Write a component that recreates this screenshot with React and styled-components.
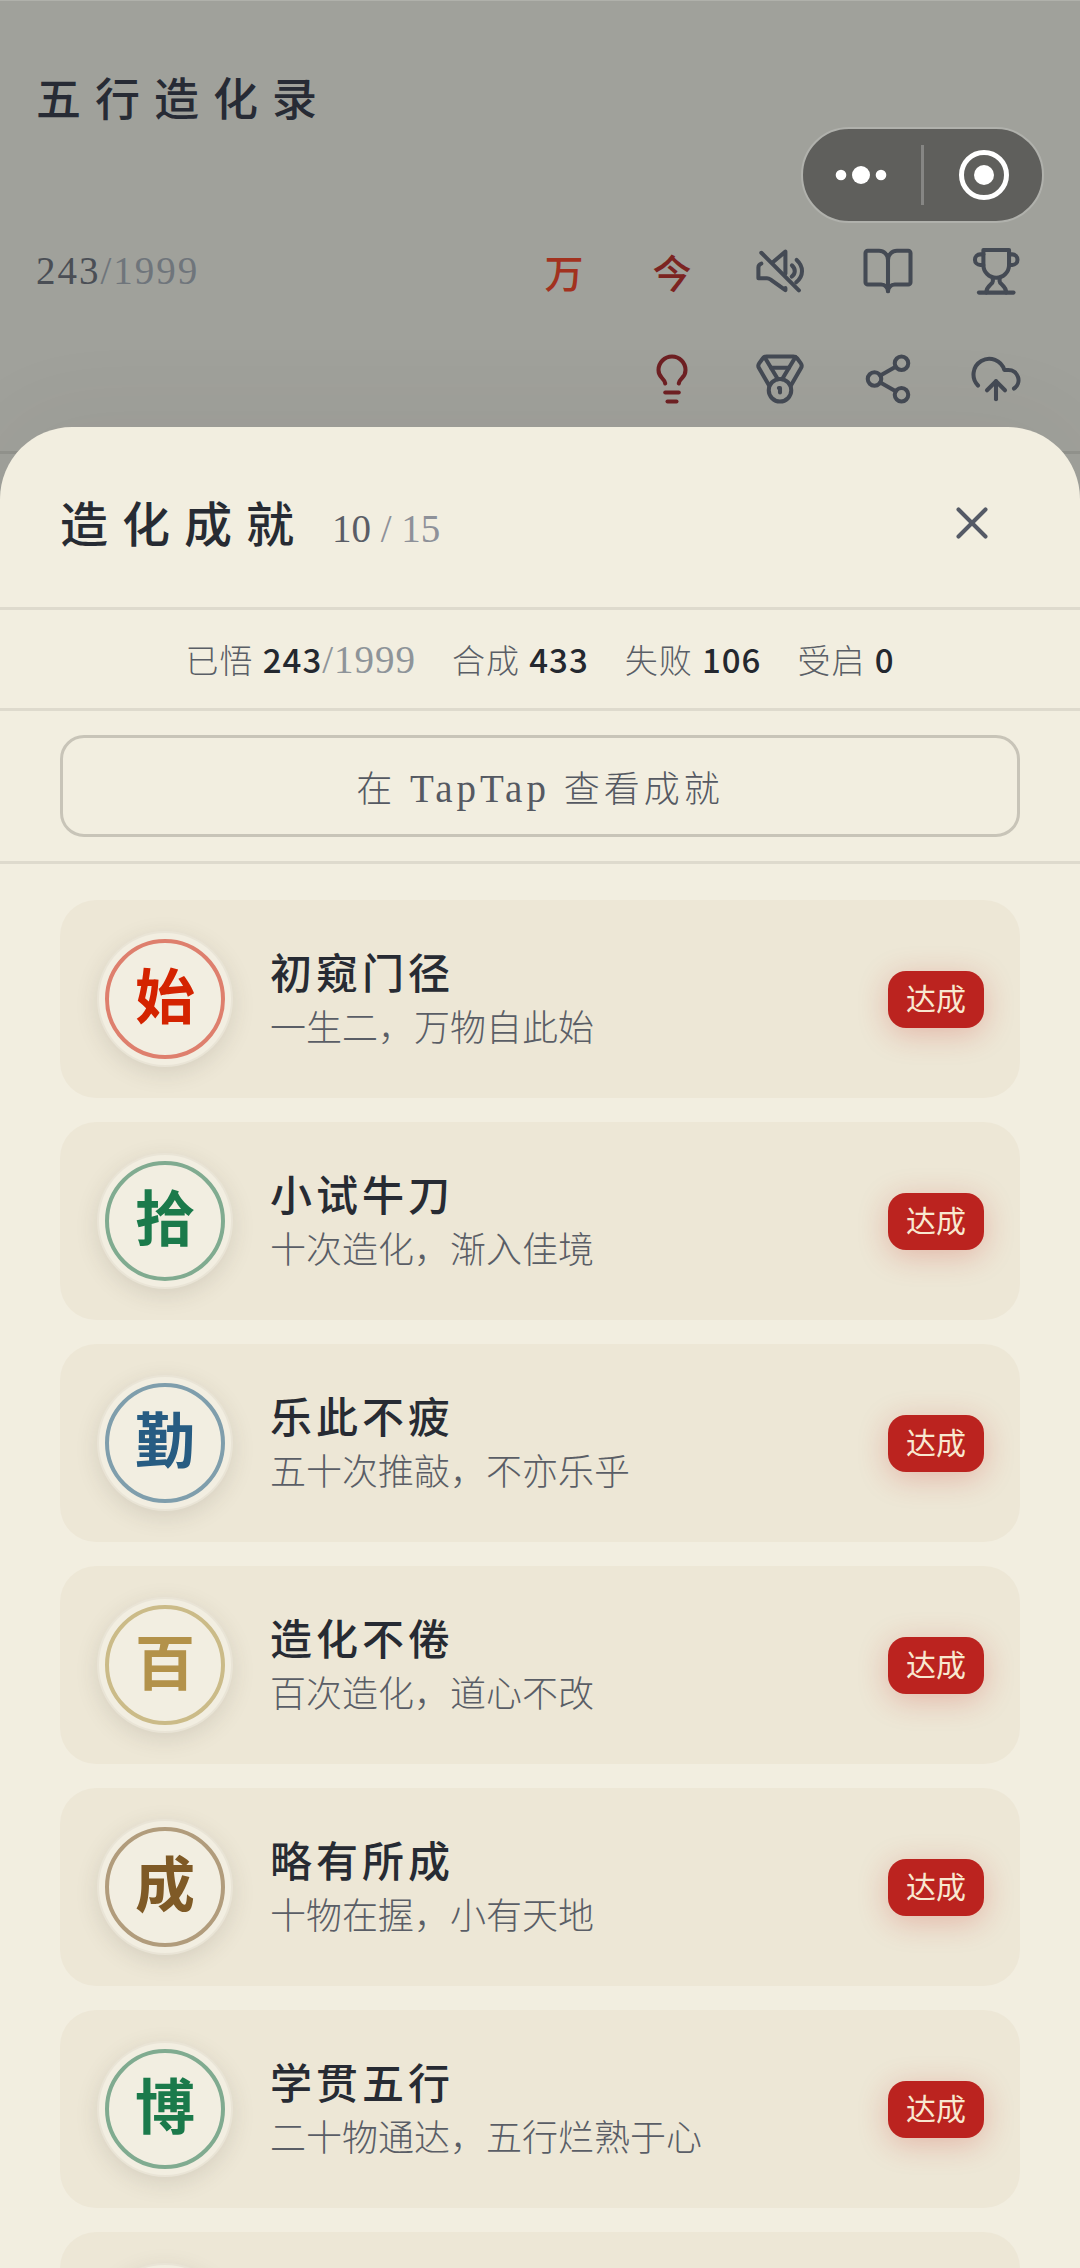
import React from 'react';
import styled, { createGlobalStyle } from 'styled-components';
import { BookOpen, Lightbulb, Medal, Share2, CloudUpload, X } from 'lucide-react';

const stats = [
  { label: '已悟', value: '243', total: '/1999' },
  { label: '合成', value: '433' },
  { label: '失败', value: '106' },
  { label: '受启', value: '0' },
];

const achievements = [
  { mark: '始', name: '初窥门径', text: '一生二，万物自此始', color: '#d42300', ring: '#de7f6d' },
  { mark: '拾', name: '小试牛刀', text: '十次造化，渐入佳境', color: '#1b7a4b', ring: '#80ab90' },
  { mark: '勤', name: '乐此不疲', text: '五十次推敲，不亦乐乎', color: '#275c82', ring: '#7f9eac' },
  { mark: '百', name: '造化不倦', text: '百次造化，道心不改', color: '#b3924a', ring: '#cbbb88' },
  { mark: '成', name: '略有所成', text: '十物在握，小有天地', color: '#7f5a26', ring: '#b19c7c' },
  { mark: '博', name: '学贯五行', text: '二十物通达，五行烂熟于心', color: '#1b7a4b', ring: '#80ab90' },
];

function App(){
  return(
    <Screen>
      <GlobalStyle/>
      <TopBar>
        <GameTitle>五行造化录</GameTitle>
        <TopRow>
          <TopCount>243<span>/1999</span></TopCount>
          <Actions>
            <IconButton $color="#a2321f" aria-label="万物">万</IconButton>
            <IconButton $color="#7c2421" aria-label="今日">今</IconButton>
            <IconButton aria-label="静音"><MuteIcon/></IconButton>
            <IconButton aria-label="图鉴"><BookOpen size={54} strokeWidth={1.8}/></IconButton>
            <IconButton aria-label="成就"><TrophyIcon/></IconButton>
            <IconButton $color="#6e2023" aria-label="提示"><Lightbulb size={54} strokeWidth={1.8}/></IconButton>
            <IconButton aria-label="排行"><Medal size={54} strokeWidth={1.8}/></IconButton>
            <IconButton aria-label="分享"><Share2 size={54} strokeWidth={1.8}/></IconButton>
            <IconButton aria-label="上传"><CloudUpload size={54} strokeWidth={1.8}/></IconButton>
          </Actions>
        </TopRow>
      </TopBar>

      <Capsule>
        <CapsuleButton aria-label="更多">
          <svg width="54" height="54" viewBox="0 0 54 54" fill="#fff">
            <circle cx="6" cy="27" r="5.3"/>
            <circle cx="26" cy="27" r="9"/>
            <circle cx="46" cy="27" r="5.3"/>
          </svg>
        </CapsuleButton>
        <CapsuleLine/>
        <CapsuleButton aria-label="关闭小游戏">
          <svg width="54" height="54" viewBox="0 0 54 54">
            <circle cx="28" cy="27" r="22.5" fill="none" stroke="#fff" strokeWidth="5"/>
            <circle cx="28" cy="27" r="10" fill="#fff"/>
          </svg>
        </CapsuleButton>
      </Capsule>

      <Overlay>
        <Sheet role="dialog" aria-label="造化成就">
          <SheetHeader>
            <SheetTitle>造化成就</SheetTitle>
            <SheetCount>10<span> / 15</span></SheetCount>
            <CloseButton aria-label="关闭"><X size={54} strokeWidth={1.8}/></CloseButton>
          </SheetHeader>
          <Stats>
            {stats.map((s) => (
              <Stat key={s.label}>
                {s.label} <b>{s.value}</b>{s.total && <span>{s.total}</span>}
              </Stat>
            ))}
          </Stats>
          <LinkBar>
            <TapButton>在<span> TapTap </span>查看成就</TapButton>
          </LinkBar>
          <List>
            {achievements.map((a) => (
              <Card key={a.name}>
                <Seal $color={a.color} $ring={a.ring}><span>{a.mark}</span></Seal>
                <CardText>
                  <h3>{a.name}</h3>
                  <p>{a.text}</p>
                </CardText>
                <Badge>达成</Badge>
              </Card>
            ))}
            <Card>
              <Seal $color="#275c82" $ring="#7f9eac"><span/></Seal>
            </Card>
          </List>
        </Sheet>
      </Overlay>
    </Screen>
  )
}

const MuteIcon = () => (
  <svg width="54" height="54" viewBox="0 0 24 24" fill="none" stroke="currentColor" strokeWidth="1.8" strokeLinecap="round" strokeLinejoin="round">
    <path d="M3.7 3.9 20.4 20.6"/>
    <path d="M8.8 8.1 14.4 3.4V13.2"/>
    <path d="M3.7 8.7C2.8 9 2.4 9.5 2.4 10.4V15.2H6.2C7 15.2 7.4 15.5 8 15.9L14.4 20.5V19.6"/>
    <path d="M17.3 9.5C19 11 19 13.2 17.2 14.5"/>
    <path d="M19.4 7.1C22.6 10 22.6 14.2 19.2 17"/>
  </svg>
);

const TrophyIcon = () => (
  <svg width="54" height="54" viewBox="0 0 24 24" fill="none" stroke="currentColor" strokeWidth="1.8" strokeLinecap="round" strokeLinejoin="round">
    <path d="M6.4 2.7H17.8V9.3A5.7 5.7 0 0 1 6.4 9.3Z"/>
    <path d="M6.4 4.6H5A2.3 2.3 0 0 0 5 9.3H6.4"/>
    <path d="M17.8 4.6H19.2A2.3 2.3 0 0 1 19.2 9.3H17.8"/>
    <path d="M10.6 15.3V16.6C10.6 18 7.7 18.4 7.7 21.6"/>
    <path d="M13.6 15.3V16.6C13.6 18 16.5 18.4 16.5 21.6"/>
    <path d="M4.4 21.6H19.8"/>
  </svg>
);

const GlobalStyle = createGlobalStyle`
  * {
    box-sizing: border-box;
    margin: 0;
    padding: 0;
  }

  body {
    background: #a0a19b;
    font-family: "Liberation Serif", "Noto Sans CJK SC", serif;
  }

  button {
    border: none;
    background: none;
    font-family: inherit;
    cursor: pointer;
  }

  svg {
    display: block;
  }
`;

const Screen = styled.div`
  position: relative;
  height: 100vh;
  overflow: hidden;
`;

const TopBar = styled.header`
  padding: 66px 36px 24px;
  border-top: 1px solid #b0b1ab;
  border-bottom: 3px solid #92938d;
`;

const GameTitle = styled.h1`
  font-size: 45px;
  line-height: 68px;
  font-weight: 500;
  letter-spacing: 14px;
  color: #272b35;
`;

const TopRow = styled.div`
  display: flex;
  justify-content: space-between;
  align-items: flex-start;
  margin-top: 88px;
`;

const TopCount = styled.div`
  font-size: 39px;
  line-height: 96px;
  letter-spacing: 2px;
  color: #4a4e55;

  span {
    color: #6f757b;
  }
`;

const Actions = styled.nav`
  display: flex;
  flex-wrap: wrap;
  justify-content: flex-end;
  gap: 12px;
  width: 540px;
`;

const IconButton = styled.button`
  display: flex;
  align-items: center;
  justify-content: center;
  width: 96px;
  height: 96px;
  font-size: 39px;
  font-weight: 500;
  color: ${(props) => props.$color || '#444a54'};
`;

const Capsule = styled.div`
  position: absolute;
  top: 127px;
  right: 36px;
  display: flex;
  align-items: center;
  width: 243px;
  height: 96px;
  border: 2px solid #b0b1ac;
  border-radius: 48px;
  background: #5f5f5c;
`;

const CapsuleButton = styled.button`
  flex: 1;
  display: flex;
  justify-content: center;
`;

const CapsuleLine = styled.div`
  width: 3px;
  height: 60px;
  background: #868684;
`;

const Overlay = styled.div`
  position: absolute;
  inset: 0;
  display: flex;
  flex-direction: column;
  padding-top: 427px;
  pointer-events: none;
`;

const Sheet = styled.section`
  flex: 1;
  min-height: 0;
  display: flex;
  flex-direction: column;
  overflow: hidden;
  border-radius: 72px 72px 0 0;
  background: #f2eee0;
  box-shadow: 0 -12px 90px rgba(60, 50, 50, 0.06);
  pointer-events: auto;
`;

const SheetHeader = styled.div`
  display: flex;
  align-items: center;
  padding: 48px 60px 36px;
  border-bottom: 3px solid #dedacd;
`;

const SheetTitle = styled.h2`
  padding-top: 6px;
  font-size: 48px;
  line-height: 72px;
  font-weight: 500;
  letter-spacing: 14px;
  color: #272b33;
`;

const SheetCount = styled.div`
  margin-left: 24px;
  padding-top: 12px;
  font-size: 39px;
  line-height: 48px;
  color: #5a5d66;

  span {
    color: #8e9199;
  }
`;

const CloseButton = styled.button`
  display: flex;
  align-items: center;
  justify-content: center;
  width: 96px;
  height: 96px;
  margin-left: auto;
  color: #555a66;
`;

const Stats = styled.div`
  display: flex;
  justify-content: center;
  gap: 36px;
  padding: 25px 60px;
  border-bottom: 3px solid #dedacd;
`;

const Stat = styled.div`
  height: 48px;
  font-size: 33px;
  line-height: 48px;
  font-weight: 300;
  letter-spacing: 1px;
  color: #5a5e66;
  white-space: nowrap;

  b {
    font-family: "Noto Sans CJK SC", sans-serif;
    font-weight: 500;
    color: #24282f;
  }

  span {
    font-size: 39px;
    color: #8e9499;
  }
`;

const LinkBar = styled.div`
  padding: 24px 60px;
  border-bottom: 3px solid #dedacd;
`;

const TapButton = styled.button`
  display: block;
  width: 100%;
  height: 102px;
  border: 3px solid #c8c4b8;
  border-radius: 24px;
  font-size: 36px;
  font-weight: 300;
  letter-spacing: 4px;
  color: #555962;

  span {
    font-size: 39px;
  }
`;

const List = styled.ul`
  flex: 1;
  min-height: 0;
  overflow: hidden;
  display: flex;
  flex-direction: column;
  gap: 24px;
  padding: 36px 60px;
  list-style: none;
`;

const Card = styled.li`
  flex: none;
  display: flex;
  align-items: center;
  padding: 30px 36px;
  border-radius: 36px;
  background: #ede7d6;
`;

const Seal = styled.div`
  flex: none;
  width: 132px;
  height: 132px;
  margin: 3px;
  padding: 6px;
  border-radius: 50%;
  background: #f2eee1;
  box-shadow: 0 0 0 2px #e9e4d6, 0 6px 24px rgba(60, 55, 45, 0.15);

  span {
    display: flex;
    align-items: center;
    justify-content: center;
    height: 120px;
    border: 4px solid ${(props) => props.$ring};
    border-radius: 50%;
    font-size: 60px;
    line-height: 60px;
    font-weight: 700;
    color: ${(props) => props.$color};
  }
`;

const CardText = styled.div`
  flex: 1;
  margin-left: 36px;

  h3 {
    font-size: 42px;
    line-height: 60px;
    font-weight: 500;
    letter-spacing: 4px;
    color: #272b33;
  }

  p {
    font-size: 36px;
    line-height: 48px;
    font-weight: 300;
    color: #5a5e66;
  }
`;

const Badge = styled.span`
  padding: 0 18px;
  border-radius: 18px;
  background: #bb231f;
  box-shadow: 0 6px 30px rgba(200, 40, 30, 0.25);
  font-size: 30px;
  line-height: 57px;
  color: #f8e8d0;
`;

export default App;
